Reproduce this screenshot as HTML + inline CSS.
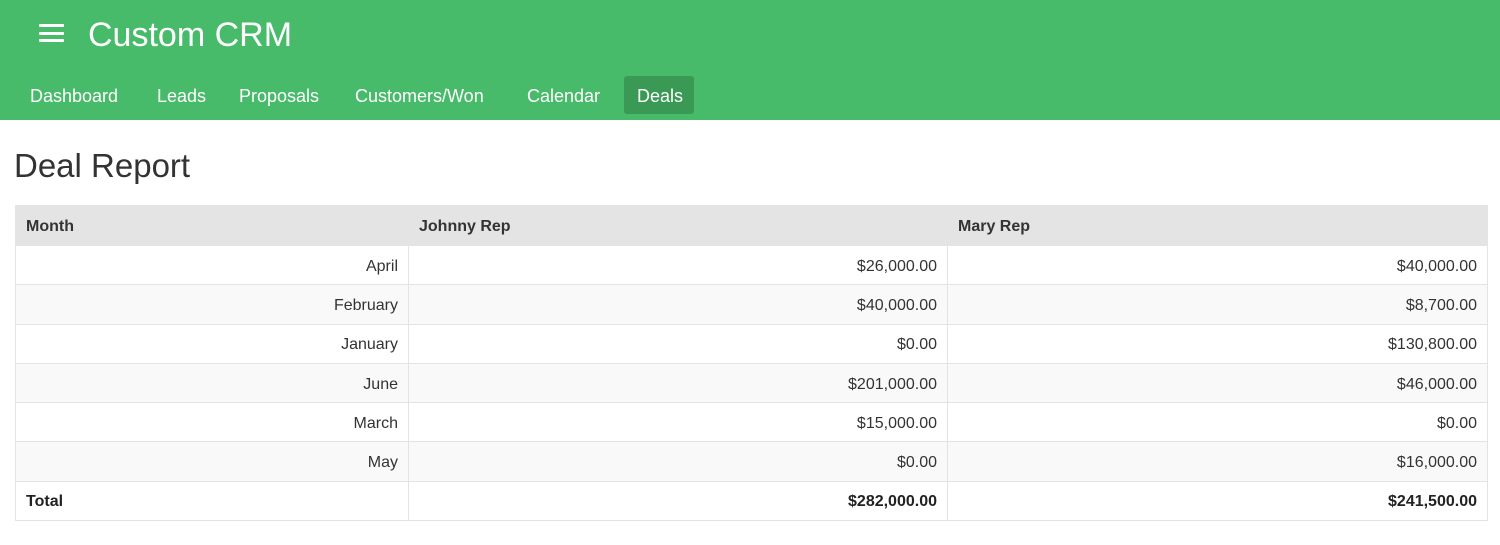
<!DOCTYPE html>
<html><head><meta charset="utf-8"><style>
*{box-sizing:border-box;margin:0;padding:0}
body{width:1500px;height:545px;background:#fff;font-family:"Liberation Sans",sans-serif;color:#333;overflow:hidden}
.top{background:#48bb6a;height:120px;position:relative}
.burger{position:absolute;left:39px;top:24px;width:25px}
.burger i{display:block;height:3px;background:#fff;margin-bottom:4.5px;border-radius:1px}
.title{position:absolute;left:88px;top:16px;color:#fff;font-size:34px}
.nav a{position:absolute;top:76px;color:#fff;font-size:18px;height:38px;line-height:40px;text-decoration:none;border-radius:3px}
.nav a.act{background:#3a9a55;padding:0 13px;left:624px;width:70px}
h1{position:absolute;left:14px;top:147px;font-weight:normal;font-size:33px;color:#333}
table{position:absolute;left:15px;top:205px;width:1473px;border-collapse:collapse;font-size:16px}
th,td{border:1px solid #e3e3e3;height:39.3px;padding:3px 10px 0}
th{background:#e4e4e4;text-align:left;font-weight:bold;border-color:#e4e4e4;height:40px}
td{text-align:right}
tbody tr:nth-child(even) td{background:#f9f9f9}
.tot td{font-weight:bold;color:#222;background:#fff!important}
.tot td:first-child{text-align:left}
</style></head><body>
<div class="top">
<div class="burger"><i></i><i></i><i></i></div>
<div class="title">Custom CRM</div>
<div class="nav"><a style="left:30px">Dashboard</a><a style="left:157px">Leads</a><a style="left:239px">Proposals</a><a style="left:355px">Customers/Won</a><a style="left:527px">Calendar</a><a class="act">Deals</a></div>
</div>
<h1>Deal Report</h1>
<table>
<thead><tr><th style="width:393px">Month</th><th style="width:539px">Johnny Rep</th><th>Mary Rep</th></tr></thead>
<tbody>
<tr><td>April</td><td>$26,000.00</td><td>$40,000.00</td></tr>
<tr><td>February</td><td>$40,000.00</td><td>$8,700.00</td></tr>
<tr><td>January</td><td>$0.00</td><td>$130,800.00</td></tr>
<tr><td>June</td><td>$201,000.00</td><td>$46,000.00</td></tr>
<tr><td>March</td><td>$15,000.00</td><td>$0.00</td></tr>
<tr><td>May</td><td>$0.00</td><td>$16,000.00</td></tr>
<tr class="tot"><td>Total</td><td>$282,000.00</td><td>$241,500.00</td></tr>
</tbody>
</table>
</body></html>
